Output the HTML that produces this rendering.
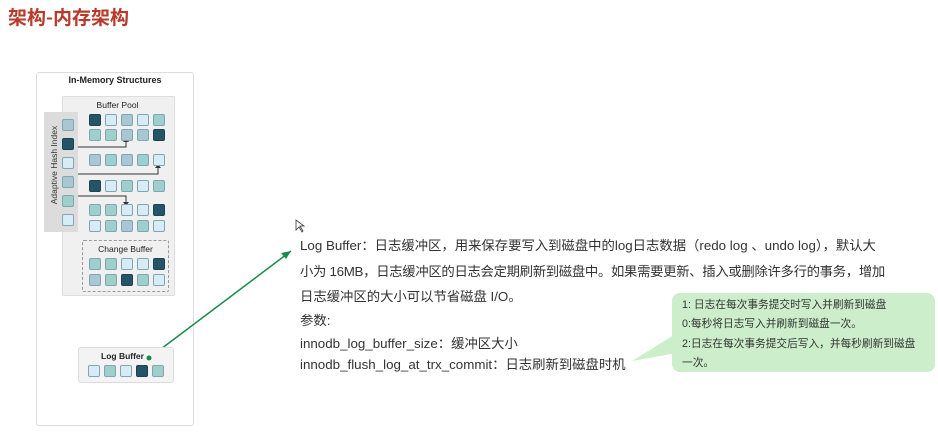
<!DOCTYPE html>
<html><head><meta charset="utf-8"><style>
body{margin:0;width:938px;height:433px;background:#fff;position:relative;overflow:hidden;font-family:"Liberation Sans","Noto Sans CJK SC",sans-serif}
.a{position:absolute}
.s{position:absolute;width:10px;height:10px;border-radius:2px;border:1px solid #7fa6b3}
.D{background:#245466;border-color:#1b4352}.L{background:#d7ecf4}.M{background:#a9c7d3}.T{background:#9fcfca}
.t{position:absolute;left:300px;font-size:13.35px;color:#333;white-space:nowrap}
.b{position:absolute;left:682px;font-size:10.7px;color:#333;white-space:nowrap}
</style></head><body>
<div class="a" style="left:8px;top:3px;font-size:19px;font-weight:bold;color:#b83a2a;font-family:'Noto Sans CJK SC',sans-serif">架构-内存架构</div>

<div class="a" style="left:36px;top:72px;width:156px;height:352px;border:1px solid #ddd;border-radius:3px"></div>
<div class="a" style="left:36px;top:75px;width:158px;text-align:center;font-size:9px;font-weight:bold;color:#222">In-Memory Structures</div>
<div class="a" style="left:62px;top:96px;width:111px;height:198px;background:#f0f0f0;border:1px solid #ddd;border-radius:2px"></div>
<div class="a" style="left:62px;top:100px;width:111px;text-align:center;font-size:8.5px;color:#222">Buffer Pool</div>
<div class="a" style="left:44px;top:112px;width:34px;height:120px;background:#dcdcdc"></div>
<div class="a" style="left:4px;top:159px;width:100px;transform:rotate(-90deg);font-size:8.5px;color:#333;white-space:nowrap;text-align:center;line-height:12px">Adaptive Hash Index</div>
<div class="a" style="left:82px;top:240px;width:85px;height:50px;border:1px dashed #999;border-radius:2px"></div>
<div class="a" style="left:82px;top:244px;width:87px;text-align:center;font-size:8.5px;color:#222">Change Buffer</div>

<svg class="a" style="left:0;top:0" width="938" height="433">
<g stroke="#333" stroke-width="1" fill="none">
<path d="M78 147H126V141"/><path d="M78 174H158V167"/><path d="M78 196H126V203"/>
</g>
<g fill="#333"><path d="M123 142L126 138L129 142Z"/><path d="M155 168L158 164L161 168Z"/><path d="M123 202L126 206L129 202Z"/></g>
<line x1="149" y1="358" x2="291" y2="251" stroke="#1a8a4a" stroke-width="1.5"/>
<path d="M291 251L281 253L286 259Z" fill="#1a8a4a"/>
<path d="M296 220L296 230L299 227L302 232L303 231L300 226L304 226Z" fill="#fff" stroke="#333" stroke-width=".8"/>
<path d="M682 330L632 361L682 352Z" fill="#cdeeca"/>
</svg>

<div class="s D" style="left:89px;top:114px"></div><div class="s L" style="left:105px;top:114px"></div><div class="s M" style="left:121px;top:114px"></div><div class="s L" style="left:137px;top:114px"></div><div class="s T" style="left:153px;top:114px"></div>
<div class="s T" style="left:89px;top:129px"></div><div class="s T" style="left:105px;top:129px"></div><div class="s M" style="left:121px;top:129px"></div><div class="s M" style="left:137px;top:129px"></div><div class="s D" style="left:153px;top:129px"></div>
<div class="s M" style="left:89px;top:154px"></div><div class="s T" style="left:105px;top:154px"></div><div class="s M" style="left:121px;top:154px"></div><div class="s T" style="left:137px;top:154px"></div><div class="s L" style="left:153px;top:154px"></div>
<div class="s D" style="left:89px;top:180px"></div><div class="s L" style="left:105px;top:180px"></div><div class="s T" style="left:121px;top:180px"></div><div class="s L" style="left:137px;top:180px"></div><div class="s T" style="left:153px;top:180px"></div>
<div class="s T" style="left:89px;top:204px"></div><div class="s T" style="left:105px;top:204px"></div><div class="s L" style="left:121px;top:204px"></div><div class="s L" style="left:137px;top:204px"></div><div class="s D" style="left:153px;top:204px"></div>
<div class="s L" style="left:89px;top:220px"></div><div class="s T" style="left:105px;top:220px"></div><div class="s M" style="left:121px;top:220px"></div><div class="s T" style="left:137px;top:220px"></div><div class="s L" style="left:153px;top:220px"></div>
<div class="s T" style="left:89px;top:258px"></div><div class="s T" style="left:105px;top:258px"></div><div class="s L" style="left:121px;top:258px"></div><div class="s L" style="left:137px;top:258px"></div><div class="s D" style="left:153px;top:258px"></div>
<div class="s M" style="left:89px;top:274px"></div><div class="s T" style="left:105px;top:274px"></div><div class="s D" style="left:121px;top:274px"></div><div class="s T" style="left:137px;top:274px"></div><div class="s L" style="left:153px;top:274px"></div>
<div class="s M" style="left:62px;top:119px"></div><div class="s D" style="left:62px;top:138px"></div><div class="s L" style="left:62px;top:157px"></div><div class="s M" style="left:62px;top:176px"></div><div class="s T" style="left:62px;top:195px"></div><div class="s L" style="left:62px;top:214px"></div>

<div class="a" style="left:78px;top:347px;width:94px;height:34px;background:#f3f3f3;border:1px solid #ddd;border-radius:3px"></div>
<div class="a" style="left:101px;top:351px;font-size:8.5px;font-weight:bold;color:#222">Log Buffer</div>
<div class="s L" style="left:88px;top:365px"></div><div class="s T" style="left:104px;top:365px"></div><div class="s L" style="left:120px;top:365px"></div><div class="s D" style="left:136px;top:365px"></div><div class="s T" style="left:152px;top:365px"></div>
<svg class="a" style="left:0;top:0" width="200" height="400"><circle cx="149" cy="358" r="2.5" fill="#1a8a4a"/></svg>

<div class="t" style="top:235px">Log Buffer：日志缓冲区，用来保存要写入到磁盘中的log日志数据（redo log 、undo log），默认大</div>
<div class="t" style="top:261px;letter-spacing:-0.3px">小为 16MB，日志缓冲区的日志会定期刷新到磁盘中。如果需要更新、插入或删除许多行的事务，增加</div>
<div class="t" style="top:286px">日志缓冲区的大小可以节省磁盘 I/O。</div>
<div class="t" style="top:310px">参数:</div>
<div class="t" style="top:333px">innodb_log_buffer_size：缓冲区大小</div>
<div class="t" style="top:354px">innodb_flush_log_at_trx_commit：日志刷新到磁盘时机</div>

<div class="a" style="left:672px;top:293px;width:263px;height:79px;background:#cdeeca;border-radius:8px"></div>
<div class="b" style="top:297px">1: 日志在每次事务提交时写入并刷新到磁盘</div>
<div class="b" style="top:316px">0:每秒将日志写入并刷新到磁盘一次。</div>
<div class="b" style="top:336px">2:日志在每次事务提交后写入，并每秒刷新到磁盘</div>
<div class="b" style="top:355px">一次。</div>
</body></html>
